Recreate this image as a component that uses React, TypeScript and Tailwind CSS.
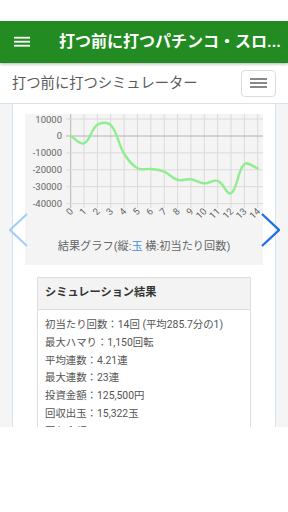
import React from "react";

const data = [0, -4300, 6600, 6400, -10500, -19100, -19500, -21100, -26000, -25600, -28000, -26600, -33900, -16700, -19100];

const X = (i: number) => 45.7 + 13.36 * i;
const Y = (v: number) => 22 - v * 0.00169;

function splinePath(pts: { x: number; y: number }[], t = 0.4) {
  const cps = pts.map((cur, i) => {
    const prev = pts[i - 1] || cur;
    const next = pts[i + 1] || cur;
    const d01 = Math.hypot(cur.x - prev.x, cur.y - prev.y);
    const d12 = Math.hypot(next.x - cur.x, next.y - cur.y);
    let s01 = d01 / (d01 + d12);
    let s12 = d12 / (d01 + d12);
    if (isNaN(s01)) s01 = 0;
    if (isNaN(s12)) s12 = 0;
    const fa = t * s01;
    const fb = t * s12;
    return {
      c1: { x: cur.x - fa * (next.x - prev.x), y: cur.y - fa * (next.y - prev.y) },
      c2: { x: cur.x + fb * (next.x - prev.x), y: cur.y + fb * (next.y - prev.y) },
    };
  });
  let d = `M${pts[0].x},${pts[0].y}`;
  for (let i = 1; i < pts.length; i++) {
    const a = cps[i - 1].c2;
    const b = cps[i].c1;
    d += ` C${a.x.toFixed(2)},${a.y.toFixed(2)} ${b.x.toFixed(2)},${b.y.toFixed(2)} ${pts[i].x.toFixed(2)},${pts[i].y.toFixed(2)}`;
  }
  return d;
}

function Chart() {
  const pts = data.map((v, i) => ({ x: X(i), y: Y(v) }));
  const yTicks = [10000, 0, -10000, -20000, -30000, -40000];
  return (
    <svg width="238" height="112" viewBox="0 0 238 112" style={{ fontFamily: "Roboto, 'Liberation Sans', sans-serif" }}>
      {data.map((_, i) => (
        <line key={"v" + i} x1={X(i)} x2={X(i)} y1={0} y2={94} stroke={i === 0 ? "#b5b5b5" : "#dadada"} strokeWidth={1} />
      ))}
      {yTicks.map((v) => (
        <line key={"h" + v} x1={41} x2={238} y1={Y(v)} y2={Y(v)} stroke={v === 0 ? "#b0b0b0" : "#dadada"} strokeWidth={1} />
      ))}
      {yTicks.map((v) => (
        <text key={"t" + v} x={37} y={Y(v) + 3.4} textAnchor="end" fontSize="9.5" fill="#666">
          {v}
        </text>
      ))}
      {data.map((_, i) => (
        <text
          key={"x" + i}
          x={X(i) + 3}
          y={98}
          textAnchor="end"
          fontSize="9.5"
          fill="#666"
          transform={`rotate(-45 ${X(i) + 3} 98)`}
        >
          {i}
        </text>
      ))}
      <path d={splinePath(pts)} fill="none" stroke="#90ee90" strokeWidth={2.4} strokeLinecap="round" />
    </svg>
  );
}

const lines = [
  "初当たり回数：14回 (平均285.7分の1)",
  "最大ハマり：1,150回転",
  "平均連数：4.21連",
  "最大連数：23連",
  "投資金額：125,500円",
  "回収出玉：15,322玉",
  "回収金額：53,627円",
];

export default function App() {
  return (
    <div
      className="w-[288px] h-[512px] bg-white overflow-hidden"
      style={{ fontFamily: "Roboto, 'Noto Sans CJK JP', sans-serif" }}
    >
      <div className="h-[21px] bg-white" />
      <div className="h-[406px] flex flex-col overflow-hidden">
        <div className="h-[42px] shrink-0 bg-[#228b22] flex items-center shadow-[0_1px_3px_rgba(0,0,0,0.3)] relative z-10">
          <div className="w-[59px] pl-[14px] flex items-center">
            <svg width="16" height="12" viewBox="0 0 16 12">
              <rect x="0" y="0.8" width="16" height="1.8" fill="#fff" />
              <rect x="0" y="4.8" width="16" height="1.8" fill="#fff" />
              <rect x="0" y="8.8" width="16" height="1.8" fill="#fff" />
            </svg>
          </div>
          <div className="text-white font-bold text-[16px] whitespace-nowrap leading-none">打つ前に打つパチンコ・スロ...</div>
        </div>
        <div className="h-[41px] shrink-0 bg-white border-b border-[#d7e3ee] flex items-center justify-between pl-[12px] pr-[12px]">
          <div className="text-[14.3px] text-[#5a5a5a] leading-none">打つ前に打つシミュレーター</div>
          <div className="w-[35px] h-[27px] border border-[#dcdcdc] rounded-[4px] flex flex-col items-center justify-center gap-[2.5px]">
            <div className="w-[17px] h-[1.8px] bg-[#888]" />
            <div className="w-[17px] h-[1.8px] bg-[#888]" />
            <div className="w-[17px] h-[1.8px] bg-[#888]" />
          </div>
        </div>
        <div className="flex-1 bg-[#f5f5f5] px-[12px] relative overflow-hidden">
          <div className="h-full bg-white border-x border-[#d6e4f0] pt-[10px] px-[12px]">
            <div className="h-[151px] bg-[#f4f4f4] flex flex-col">
              <Chart />
              <div className="mt-[13px] leading-[16px] text-[11.2px] text-[#666] text-center whitespace-nowrap">
                結果グラフ(縦:<span className="text-[#4a8fd6]">玉</span> 横:初当たり回数)
              </div>
            </div>
            <div className="mt-[12px] mx-[12px] border border-[#dddddd]">
              <div className="h-[32px] bg-[#f3f3f3] border-b border-[#dddddd] px-[7px] flex items-center text-[11.2px] font-bold text-[#333]">
                シミュレーション結果
              </div>
              <div className="px-[7px] pt-[6px] text-[10.4px] leading-[17.8px] text-[#555]">
                {lines.map((l) => (
                  <div key={l} className="whitespace-nowrap">{l}</div>
                ))}
              </div>
            </div>
          </div>
          <svg className="absolute left-[9px] top-[109px]" width="19" height="34" viewBox="0 0 19 34">
            <polyline points="18,1 1,17 18,33" fill="none" stroke="#a3cdf7" strokeWidth="2" />
          </svg>
          <svg className="absolute left-[261px] top-[109px]" width="19" height="34" viewBox="0 0 19 34">
            <polyline points="1,1 18,17 1,33" fill="none" stroke="#1f6fe8" strokeWidth="2.4" />
          </svg>
        </div>
      </div>
    </div>
  );
}
